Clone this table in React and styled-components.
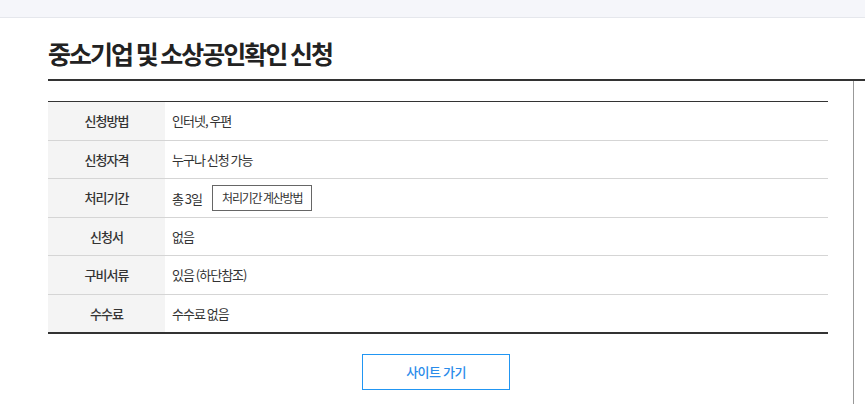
import React from "react";
import styled, { createGlobalStyle } from "styled-components";

const rows = [
  { label: "신청방법", value: "인터넷, 우편" },
  { label: "신청자격", value: "누구나 신청 가능" },
  { label: "처리기간", value: "총 3일", extra: "처리기간 계산방법" },
  { label: "신청서", value: "없음" },
  { label: "구비서류", value: "있음 (하단참조)" },
  { label: "수수료", value: "수수료 없음" },
];

const App = () => {
  return (
    <>
      <GlobalStyle />
      <TopBar />
      <Main>
        <Header>
          <Title>중소기업 및 소상공인확인 신청</Title>
        </Header>
        <Body>
          <Content>
            <InfoTable>
              <tbody>
                {rows.map((row) => (
                  <Row key={row.label}>
                    <Label>{row.label}</Label>
                    <Value>
                      {row.value}
                      {row.extra && <SmallButton type="button">{row.extra}</SmallButton>}
                    </Value>
                  </Row>
                ))}
              </tbody>
            </InfoTable>
            <ButtonArea>
              <SiteButton type="button">사이트 가기</SiteButton>
            </ButtonArea>
          </Content>
        </Body>
      </Main>
    </>
  );
};

const GlobalStyle = createGlobalStyle`
  body {
    margin: 0;
    background: #fff;
    color: #333;
    font-family: "Noto Sans CJK KR", "Noto Sans", sans-serif;
    overflow: hidden;
  }
`;

const TopBar = styled.div`
  height: 17px;
  background-color: #f5f6fa;
  border-bottom: 1px solid #e5e7ec;
`;

const Main = styled.div`
  padding-left: 48px;
`;

const Header = styled.div`
  padding: 17px 0 8px;
  border-bottom: 2px solid #333;
`;

const Title = styled.h2`
  margin: 0;
  font-size: 25px;
  line-height: 36px;
  font-weight: 700;
  letter-spacing: -2px;
  color: #222;
`;

const Body = styled.div`
  display: flex;
`;

const Content = styled.div`
  width: 806px;
  min-height: calc(100vh - 81px);
  padding-top: 20px;
  box-sizing: border-box;
  border-right: 1px solid #999;
`;

const InfoTable = styled.table`
  width: 780px;
  border-collapse: collapse;
  border-top: 1px solid #333;
  border-bottom: 2px solid #333;
  font-size: 13px;
  letter-spacing: -1px;
`;

const Row = styled.tr`
  height: 38.5px;
  border-bottom: 1px solid #d5d5d5;
`;

const Label = styled.th`
  width: 117px;
  padding: 0;
  background-color: #f4f4f4;
  font-weight: 500;
  color: #333;
  text-align: center;
`;

const Value = styled.td`
  padding: 0 7px;
  color: #333;
`;

const SmallButton = styled.button`
  margin-left: 10px;
  height: 26px;
  padding: 0 9px;
  border: 1px solid #666;
  background: #fff;
  font-family: inherit;
  font-size: 12px;
  letter-spacing: -1.2px;
  color: #333;
  cursor: pointer;
`;

const ButtonArea = styled.div`
  width: 776px;
  display: flex;
  justify-content: center;
  padding-top: 20px;
`;

const SiteButton = styled.button`
  width: 148px;
  height: 36px;
  border: 1px solid #2196f3;
  background: #fff;
  font-family: inherit;
  font-size: 13px;
  font-weight: 500;
  letter-spacing: -0.5px;
  color: #2a8bea;
  cursor: pointer;
`;

export default App;
